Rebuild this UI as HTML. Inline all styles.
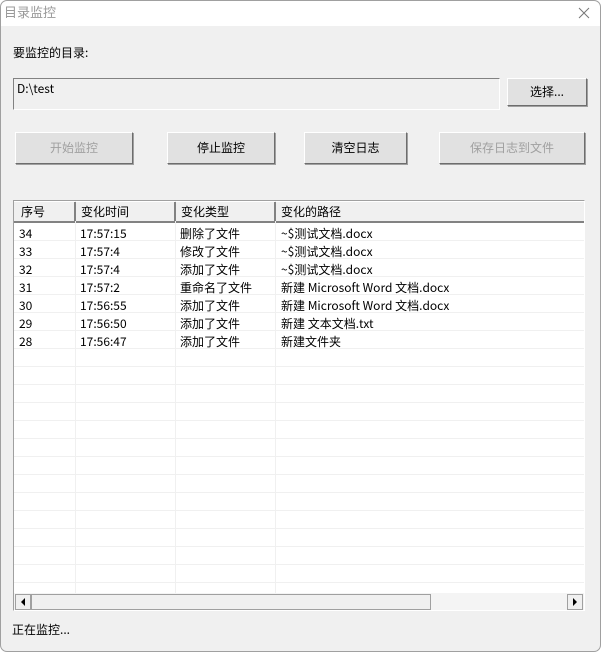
<!DOCTYPE html><html><head><meta charset="utf-8"><style>
*{margin:0;padding:0;box-sizing:border-box}
body{width:601px;height:652px;background:#fff;font-family:"Noto Sans CJK SC",sans-serif;font-size:12px;color:#000;position:relative;overflow:hidden}
.win{position:absolute;left:0;top:0;width:601px;height:652px;border-radius:7px;background:#f0f0f0;overflow:hidden}
.frame{position:absolute;left:0;top:0;width:601px;height:652px;border:1px solid #a0a0a0;border-radius:7px;pointer-events:none}
.title{position:absolute;left:0;top:0;width:100%;height:26px;background:#fff}
.a{position:absolute}
.btn{position:absolute;background:#e1e1e1;border:1px solid;border-color:#fff #6d6d6d #6d6d6d #fff;box-shadow:1px 1px 0 #a0a0a0;text-align:center;font-size:12px}
.dis{color:#a0a0a0}
.row{position:absolute;left:0;height:18px;line-height:18px;white-space:nowrap}
.row span{position:absolute}
</style></head><body><div class="win">
<div class="title"><div class="a" style="left:4px;top:3px;color:#999;font-size:13px;line-height:18px">目录监控</div>
<svg class="a" style="left:578px;top:7px" width="12" height="12"><path d="M1 1L11 11M11 1L1 11" stroke="#777" stroke-width="1"/></svg></div>
<div class="a" style="left:13px;top:44px;line-height:18px">要监控的目录:</div>
<div class="a" style="left:13px;top:78px;width:487px;height:32px;border:1px solid;border-color:#828282 #fff #fff #828282;background:#f0f0f0;padding:1px 3px;line-height:18px">D:\test</div>
<div class="btn" style="left:507px;top:78px;width:80px;height:28px;line-height:26px">选择...</div>
<div class="btn dis" style="left:15px;top:132px;width:118px;height:32px;line-height:30px">开始监控</div>
<div class="btn" style="left:167px;top:132px;width:108px;height:32px;line-height:30px">停止监控</div>
<div class="btn" style="left:304px;top:132px;width:103px;height:32px;line-height:30px">清空日志</div>
<div class="btn dis" style="left:439px;top:132px;width:146px;height:32px;line-height:30px">保存日志到文件</div>
<div class="a" style="left:13px;top:200px;width:572px;height:411px;border:1px solid;border-color:#a0a0a0 #fff #fff #a0a0a0;background:#fff;overflow:hidden">
 <div class="a" style="left:0;top:0;width:572px;height:22px;background:#f0f0f0;border-top:1px solid #fff;border-bottom:2px solid #828282"></div>
 <div class="a" style="left:0;top:22px;width:572px;height:370px;background:repeating-linear-gradient(to bottom,#fff 0 17px,#f0f0f0 17px 18px)"></div>
 <div class="a" style="left:61px;top:0;width:1px;height:392px;background:#f0f0f0"></div>
 <div class="a" style="left:161px;top:0;width:1px;height:392px;background:#f0f0f0"></div>
 <div class="a" style="left:261px;top:0;width:1px;height:392px;background:#f0f0f0"></div>
 <div class="a" style="left:60px;top:1px;width:2px;height:19px;background:#828282"></div>
 <div class="a" style="left:160px;top:1px;width:2px;height:19px;background:#828282"></div>
 <div class="a" style="left:260px;top:1px;width:2px;height:19px;background:#828282"></div>
 <div class="row" style="top:2px"><span style="left:7px">序号</span><span style="left:67px">变化时间</span><span style="left:167px">变化类型</span><span style="left:267px">变化的路径</span></div>
 <div class="row" style="top:24px"><span style="left:5px">34</span><span style="left:66px">17:57:15</span><span style="left:166px">删除了文件</span><span style="left:267px">~$测试文档.docx</span></div>
 <div class="row" style="top:42px"><span style="left:5px">33</span><span style="left:66px">17:57:4</span><span style="left:166px">修改了文件</span><span style="left:267px">~$测试文档.docx</span></div>
 <div class="row" style="top:60px"><span style="left:5px">32</span><span style="left:66px">17:57:4</span><span style="left:166px">添加了文件</span><span style="left:267px">~$测试文档.docx</span></div>
 <div class="row" style="top:78px"><span style="left:5px">31</span><span style="left:66px">17:57:2</span><span style="left:166px">重命名了文件</span><span style="left:267px">新建 Microsoft Word 文档.docx</span></div>
 <div class="row" style="top:96px"><span style="left:5px">30</span><span style="left:66px">17:56:55</span><span style="left:166px">添加了文件</span><span style="left:267px">新建 Microsoft Word 文档.docx</span></div>
 <div class="row" style="top:114px"><span style="left:5px">29</span><span style="left:66px">17:56:50</span><span style="left:166px">添加了文件</span><span style="left:267px">新建 文本文档.txt</span></div>
 <div class="row" style="top:132px"><span style="left:5px">28</span><span style="left:66px">17:56:47</span><span style="left:166px">添加了文件</span><span style="left:267px">新建文件夹</span></div>
 <div class="a" style="left:0;top:392px;width:572px;height:17px;background:#f4f4f4"></div>
 <div class="a" style="left:1px;top:393px;width:16px;height:16px;background:#f0f0f0;border:1px solid #a0a0a0"></div>
 <svg class="a" style="left:5px;top:396px" width="8" height="10"><path d="M6 1L2 5L6 9Z" fill="#000"/></svg>
 <div class="a" style="left:17px;top:393px;width:400px;height:16px;background:#f0f0f0;border:1px solid #a0a0a0"></div>
 <div class="a" style="left:553px;top:393px;width:16px;height:16px;background:#f0f0f0;border:1px solid #a0a0a0"></div>
 <svg class="a" style="left:557px;top:396px" width="8" height="10"><path d="M2 1L6 5L2 9Z" fill="#000"/></svg>
</div>
<div class="a" style="left:12px;top:621px;line-height:18px">正在监控...</div>
</div><div class="frame"></div></body></html>
